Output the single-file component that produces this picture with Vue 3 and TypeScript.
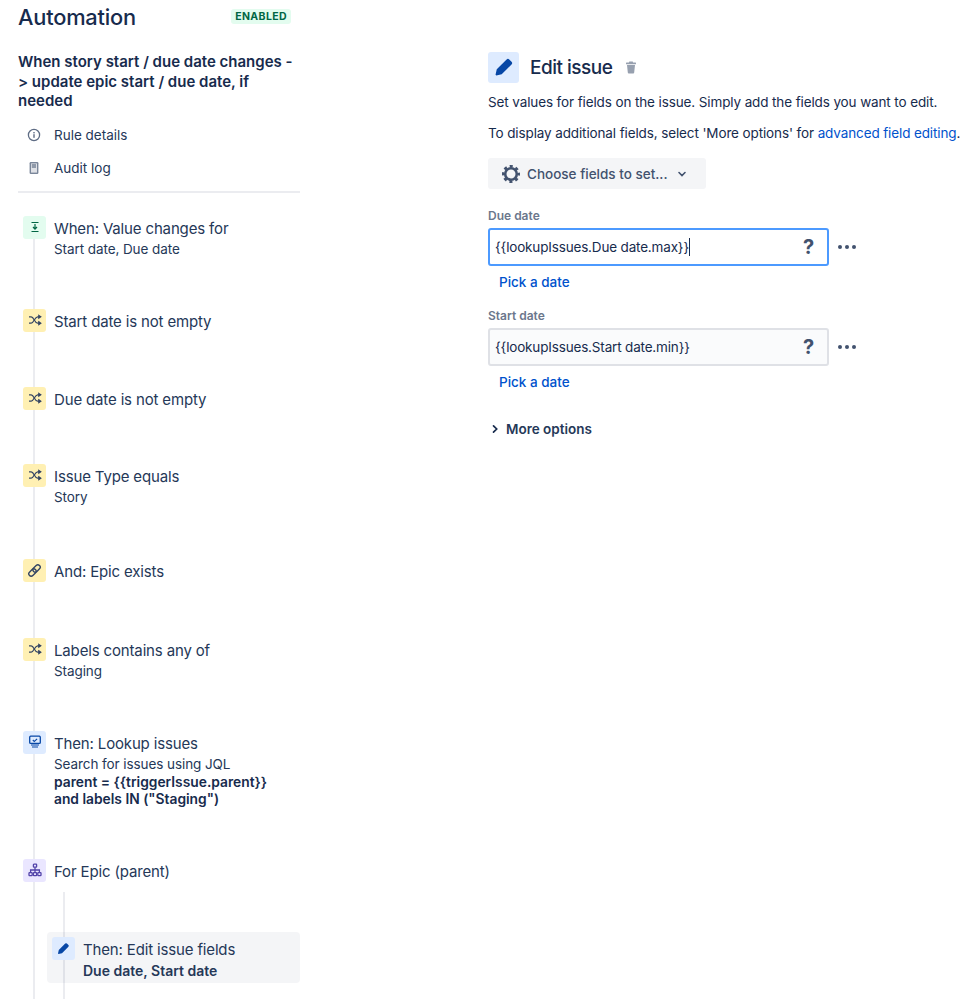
<script setup lang="ts">
type Tone = 'green' | 'yellow' | 'blue' | 'purple'
type Glyph = 'trigger' | 'shuffle' | 'link' | 'lookup' | 'branch'
interface Step {
  title: string
  sub?: string
  strong?: string[]
  tone: Tone
  glyph: Glyph
  height: number
}
const steps: Step[] = [
  { title: 'When: Value changes for', sub: 'Start date, Due date', tone: 'green', glyph: 'trigger', height: 93 },
  { title: 'Start date is not empty', tone: 'yellow', glyph: 'shuffle', height: 78 },
  { title: 'Due date is not empty', tone: 'yellow', glyph: 'shuffle', height: 77 },
  { title: 'Issue Type equals', sub: 'Story', tone: 'yellow', glyph: 'shuffle', height: 95 },
  { title: 'And: Epic exists', tone: 'yellow', glyph: 'link', height: 79 },
  { title: 'Labels contains any of', sub: 'Staging', tone: 'yellow', glyph: 'shuffle', height: 93 },
  {
    title: 'Then: Lookup issues',
    sub: 'Search for issues using JQL',
    strong: ['parent = {{triggerIssue.parent}}', 'and labels IN ("Staging")'],
    tone: 'blue',
    glyph: 'lookup',
    height: 128,
  },
  { title: 'For Epic (parent)', tone: 'purple', glyph: 'branch', height: 73 },
]
const fields = [
  { label: 'Due date', value: '{{lookupIssues.Due date.max}}', focused: true },
  { label: 'Start date', value: '{{lookupIssues.Start date.min}}', focused: false },
]
</script>

<template>
  <div class="page">
    <aside class="left">
      <header class="top">
        <h1>Automation</h1>
        <span class="lozenge">ENABLED</span>
      </header>
      <h2 class="rule">When story start / due date changes -<wbr />&gt; update epic start / due date, if needed</h2>
      <nav class="links">
        <a class="link">
          <svg width="14" height="14" viewBox="0 0 14 14" fill="none">
            <circle cx="7" cy="7" r="5.6" stroke="#5e6c84" stroke-width="1.3" />
            <rect x="6.3" y="6.2" width="1.4" height="3.6" fill="#5e6c84" />
            <rect x="6.3" y="4" width="1.4" height="1.4" fill="#5e6c84" />
          </svg>
          <span>Rule details</span>
        </a>
        <a class="link">
          <svg width="14" height="14" viewBox="0 0 14 14" fill="none">
            <rect x="2.6" y="1" width="8.8" height="12" rx="1.2" fill="#7a869a" />
            <rect x="4" y="2.4" width="6" height="9.2" fill="#dfe1e6" />
            <rect x="4.8" y="3.4" width="4.2" height="1.2" fill="#5e6c84" />
            <rect x="4.8" y="5.4" width="4.2" height="1.2" fill="#5e6c84" />
          </svg>
          <span>Audit log</span>
        </a>
      </nav>
      <div class="divider"></div>

      <div class="timeline">
        <div v-for="s in steps" :key="s.title" class="step" :style="{ height: s.height + 'px' }">
          <span class="badge" :class="s.tone">
            <svg v-if="s.glyph === 'trigger'" width="12" height="12" viewBox="0 0 12 12" fill="none">
              <path d="M2.5 1.5h7M2.5 10.5h7" stroke="#006644" stroke-width="1.2" />
              <path d="M6 3v4.6M4 6l2 2.2L8 6" stroke="#006644" stroke-width="1.2" />
            </svg>
            <svg v-else-if="s.glyph === 'shuffle'" width="14" height="14" viewBox="0 0 14 14" fill="none" stroke="#344563" stroke-width="1.2">
              <path d="M1 3.8h2.2c2.8 0 3.4 6.4 6.4 6.4H11" />
              <path d="M1 10.2h2.2c2.8 0 3.4-6.4 6.4-6.4H11" />
              <path d="M10.8 2.4l2 1.4-2 1.4zM10.8 8.8l2 1.4-2 1.4z" fill="#344563" />
            </svg>
            <svg v-else-if="s.glyph === 'link'" width="15" height="15" viewBox="0 0 14 14" fill="none" stroke="#344563" stroke-width="1.3">
              <g transform="rotate(-45 7 7)">
                <rect x="0.4" y="4.8" width="7.8" height="4.4" rx="2.2" />
                <rect x="5.8" y="4.8" width="7.8" height="4.4" rx="2.2" />
              </g>
            </svg>
            <svg v-else-if="s.glyph === 'lookup'" width="14" height="14" viewBox="0 0 14 14" fill="none">
              <rect x="1.7" y="1.2" width="10.6" height="7.2" rx="1" stroke="#0747a6" stroke-width="1.3" />
              <path d="M4.8 5l1.5 1.4 2.8-2.6" stroke="#0747a6" stroke-width="1.1" />
              <path d="M3 10h8M4 12h6" stroke="#0747a6" stroke-width="1.2" />
            </svg>
            <svg v-else width="14" height="14" viewBox="0 0 14 14" fill="none" stroke="#5243aa" stroke-width="1.3">
              <rect x="5.4" y="1.2" width="3.2" height="3" rx=".6" />
              <rect x="1" y="9.6" width="3.2" height="3" rx=".6" />
              <rect x="5.4" y="9.6" width="3.2" height="3" rx=".6" />
              <rect x="9.8" y="9.6" width="3.2" height="3" rx=".6" />
              <path d="M7 4.2v5.4M2.6 9.6V7h8.8v2.6" />
            </svg>
          </span>
          <div class="body">
            <div class="title">{{ s.title }}</div>
            <div v-if="s.sub" class="sub">{{ s.sub }}</div>
            <div v-if="s.strong" class="strong">
              <div v-for="l in s.strong" :key="l">{{ l }}</div>
            </div>
          </div>
        </div>

        <div class="nested">
          <div class="active">
            <span class="badge blue">
              <svg width="13" height="13" viewBox="0 0 13 13"><path d="M8.2 1.600a1.200 1.200 0 0 1 1.700 0l1.500 1.500a1.200 1.200 0 0 1 0 1.700L5 11.200 1.500 12 1 11.500l.8-3.500z" fill="#0747a6" /></svg>
            </span>
            <div class="body">
              <div class="title">Then: Edit issue fields</div>
              <div class="strong-sub">Due date, Start date</div>
            </div>
          </div>
        </div>
      </div>
    </aside>

    <main class="right">
      <div class="head">
        <span class="head-icon">
          <svg width="20" height="20" viewBox="0 0 13 13"><path d="M8.2 1.600a1.200 1.200 0 0 1 1.700 0l1.500 1.500a1.200 1.200 0 0 1 0 1.700L5 11.200 1.500 12 1 11.500l.8-3.500z" fill="#0747a6" /></svg>
        </span>
        <h2>Edit issue</h2>
        <svg class="trash" width="12" height="13" viewBox="0 0 12 13" fill="#97a0af">
          <rect x="1" y="1.600" width="10" height="1.600" rx=".5" />
          <rect x="4" y=".4" width="4" height="1.600" rx=".5" />
          <path d="M2 4h8l-.8 7.600a1 1 0 0 1-1 .9H3.800a1 1 0 0 1-1-.9z" />
        </svg>
      </div>
      <p class="desc first">Set values for fields on the issue. Simply add the fields you want to edit.</p>
      <p class="desc">To display additional fields, select 'More options' for <a class="blue-link">advanced field editing</a>.</p>
      <button class="choose" type="button">
        <svg width="20" height="20" viewBox="0 0 20 20" fill="none">
          <circle cx="10" cy="10" r="5.800" stroke="#42526e" stroke-width="2.600" />
          <circle cx="10" cy="10" r="7.800" stroke="#42526e" stroke-width="2.400" stroke-dasharray="3.100 3.026" stroke-dashoffset="1.550" />
        </svg>
        <span>Choose fields to set...</span>
        <svg class="chev" width="10" height="10" viewBox="0 0 10 10" fill="none"><path d="M2 3.500 5 6.500l3-3" stroke="#42526e" stroke-width="1.600" stroke-linecap="round" /></svg>
      </button>

      <section v-for="f in fields" :key="f.label" class="field">
        <label>{{ f.label }}</label>
        <div class="input-row">
          <div class="input" :class="{ focused: f.focused }">
            <span class="val">{{ f.value }}<i v-if="f.focused" class="caret"></i></span>
            <span class="q">?</span>
          </div>
          <span class="dots"><i></i><i></i><i></i></span>
        </div>
        <a class="pick">Pick a date</a>
      </section>

      <div class="more">
        <svg width="10" height="10" viewBox="0 0 10 10" fill="none"><path d="M3.500 1.800 6.700 5 3.500 8.200" stroke="#172b4d" stroke-width="1.700" stroke-linecap="round" /></svg>
        <span>More options</span>
      </div>
    </main>
  </div>
</template>

<style>
html, body { margin: 0; background: #fff; }
</style>

<style scoped>
.page {
  width: 978px;
  height: 999px;
  overflow: hidden;
  display: flex;
  box-sizing: border-box;
  padding-left: 18px;
  font-family: Inter, "Liberation Sans", sans-serif;
  font-variant-ligatures: none;
  font-feature-settings: "calt" 0;
  color: #172b4d;
}
.left { width: 282px; flex: none; display: flex; flex-direction: column; }
.top { display: flex; align-items: center; justify-content: space-between; height: 34px; padding-right: 9px; }
h1 { margin: 0; font-size: 21.800px; font-weight: 500; letter-spacing: -0.2px; }
.lozenge {
  background: #e3fcef; color: #006644; font-size: 10.500px; font-weight: 700;
  padding: 1px 4px; border-radius: 3px; letter-spacing: .4px; margin-top: -1px;
}
.rule { margin: 18px 0 0; font-size: 15px; line-height: 19.500px; font-weight: 600; }
.links { margin-top: 8px; display: flex; flex-direction: column; }
.link { display: flex; align-items: center; gap: 13px; height: 33px; padding-left: 9px; font-size: 13.500px; color: #253858; }
.divider { height: 2px; background: #ebecf0; margin-top: 6px; }
.timeline { position: relative; margin-top: 23px; }
.timeline::before {
  content: ""; position: absolute; left: 15px; top: 20px; bottom: -300px; width: 2px; background: #ebecf0;
}
.step { position: relative; display: flex; gap: 8px; padding-left: 5px; }
.badge {
  width: 23px; height: 23px; flex: none; border-radius: 3px;
  display: flex; align-items: center; justify-content: center; position: relative;
}
.green { background: #e3fcef; }
.yellow { background: #fff0b3; }
.blue { background: #deebff; }
.purple { background: #eae6ff; }
.body { padding-top: 2px; }
.title { font-size: 15px; line-height: 21px; letter-spacing: -0.15px; color: #253858; }
.sub { font-size: 13.500px; line-height: 19px; letter-spacing: -0.08px; color: #253858; margin-top: 1px; }
.strong { font-size: 13.800px; line-height: 17px; font-weight: 600; color: #172b4d; }
.strong-sub { font-size: 14px; line-height: 19px; font-weight: 600; color: #253858; margin-top: 1px; }
.nested { position: relative; padding-left: 29px; }
.nested::before {
  content: ""; position: absolute; left: 45px; top: -40px; bottom: -300px; width: 2px; background: #ebecf0;
}
.active {
  position: relative; display: flex; gap: 8px; height: 51px; background: rgba(9, 30, 66, .045);
  border-radius: 4px; padding: 5px 0 0 5px; box-sizing: border-box;
}
.right { margin-left: 188px; width: 490px; flex: none; }
.head { display: flex; align-items: center; margin-top: 51px; height: 32px; }
.head-icon { width: 31px; height: 31px; border-radius: 3px; background: #deebff; display: flex; align-items: center; justify-content: center; }
.head h2 { margin: 0 0 0 11px; font-size: 19px; font-weight: 500; letter-spacing: -0.5px; }
.trash { margin-left: 13px; }
.desc { margin: 9px 0 0; font-size: 13.500px; line-height: 22px; letter-spacing: -0.12px; white-space: nowrap; color: #172b4d; }
.desc.first { margin-top: 8px; }
.blue-link { color: #0052cc; }
.choose {
  display: flex; align-items: center; margin-top: 14px; width: 218px; height: 31px; border: 0; border-radius: 3px;
  background: #f4f5f7; padding: 0 0 0 13px; font: 500 13.500px Inter, "Liberation Sans", sans-serif; color: #42526e;
}
.choose span { margin-left: 6px; }
.chev { margin-left: 9px; }
.field { margin-top: 19px; }
.field + .field { margin-top: 16px; }
label { display: block; font-size: 12px; line-height: 16px; font-weight: 600; color: #6b778c; }
.input-row { display: flex; align-items: center; margin-top: 4px; }
.input {
  width: 341px; height: 38px; box-sizing: border-box; border: 2px solid #dfe1e6; border-radius: 3px;
  background: #fafbfc; display: flex; align-items: center; justify-content: space-between; padding: 0 13px 0 5px;
  font-size: 13.500px; letter-spacing: -0.17px;
}
.input.focused { border-color: #4c9aff; background: #fff; }
.val { display: inline-flex; align-items: center; }
.caret { display: inline-block; width: 1px; height: 18px; background: #172b4d; }
.q { font-size: 20px; font-weight: 700; color: #42526e; }
.dots { display: flex; gap: 3px; margin-left: 9px; }
.dots i { width: 4px; height: 4px; border-radius: 50%; background: #42526e; }
.pick { display: block; margin: 6px 0 0 11px; font-size: 13.500px; line-height: 20px; font-weight: 500; color: #0052cc; }
.more { display: flex; align-items: center; gap: 6px; margin-top: 29px; padding-left: 2px; font-size: 13.500px; font-weight: 600; color: #253858; }
</style>
